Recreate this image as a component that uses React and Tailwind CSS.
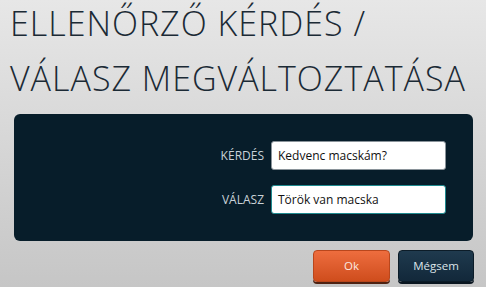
import React from 'react';

export default function App() {
  return (
    <div
      className="w-[486px] h-[287px] overflow-hidden bg-gradient-to-b from-[#e7e7e7] to-[#c6c6c6] flex flex-col"
      style={{ fontFamily: '"Open Sans", "Liberation Sans", sans-serif' }}
    >
      {/* Title */}
      <h1 className="pl-[10px] -mt-[4px] text-[34px] leading-[55px] tracking-[1px] font-light text-[#1b2a35] whitespace-nowrap">
        ELLENŐRZŐ KÉRDÉS /<br />
        VÁLASZ MEGVÁLTOZTATÁSA
      </h1>

      {/* Form panel */}
      <div className="mt-[8px] ml-[14px] mr-[13px] h-[127px] rounded-[6px] bg-[#071d2a] flex flex-col items-end justify-center gap-[15px] pr-[27px]">
        <div className="flex items-center gap-[7px]">
          <span className="text-[12px] text-[#c9d2d8]">KÉRDÉS</span>
          <div className="w-[175px] h-[29px] rounded-[3px] bg-white border border-[#8a939a] flex items-center px-[6px] text-[12px] text-[#111]">
            Kedvenc macskám?
          </div>
        </div>
        <div className="flex items-center gap-[7px]">
          <span className="text-[12px] text-[#c9d2d8]">VÁLASZ</span>
          <div className="w-[175px] h-[29px] rounded-[3px] bg-white border border-[#1f8a8f] flex items-center px-[6px] text-[12px] text-[#111]">
            Török van macska
          </div>
        </div>
      </div>

      {/* Buttons */}
      <div className="flex justify-end gap-[8px] pr-[12px] mt-[9px]">
        <button className="w-[77px] h-[32px] rounded-[4px] bg-gradient-to-b from-[#ee6d3e] to-[#cf4d1c] border border-[#b9461c] shadow-[0_2px_0_#4e2212] text-[11.5px] text-[#fbe9e1]">
          Ok
        </button>
        <button className="w-[76px] h-[32px] rounded-[4px] bg-gradient-to-b from-[#1f3a4e] to-[#12283a] border border-[#0c1c28] shadow-[0_2px_0_#0a1620] text-[11.5px] text-[#dde5ea]">
          Mégsem
        </button>
      </div>
    </div>
  );
}
